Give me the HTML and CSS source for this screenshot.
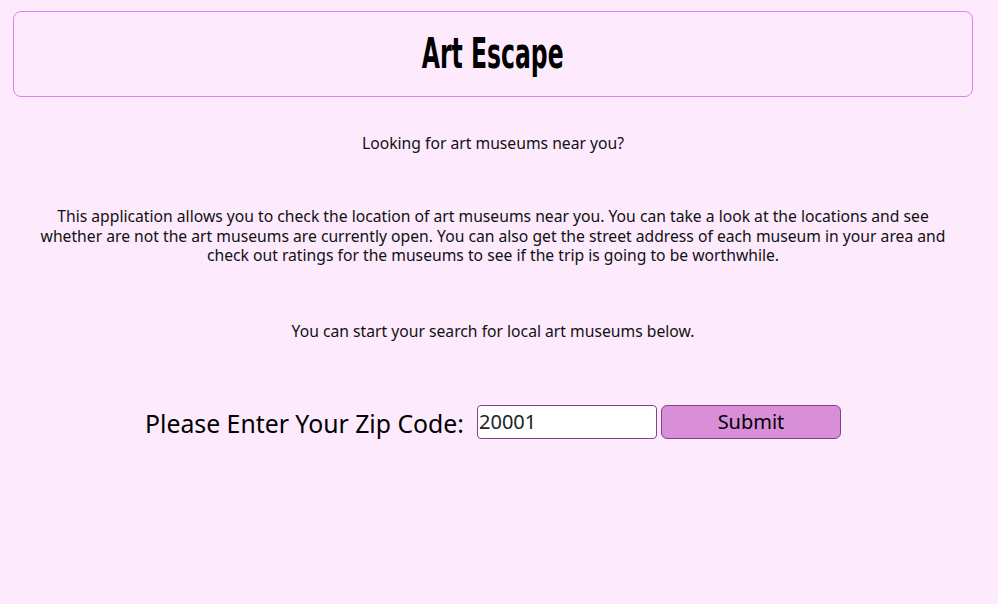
FILE: index.html
```html
<!DOCTYPE html>
<html lang="en">
<head>
<meta charset="utf-8">
<title>Art Escape</title>
<link rel="stylesheet" href="styles.css">
</head>
<body>
<div class="page">
  <header class="banner">
    <h1 class="title">Art Escape</h1>
  </header>
  <main class="content">
    <p class="lead">Looking for art museums near you?</p>
    <p class="about">This application allows you to check the location of art museums near you. You can take a look at the locations and see whether are not the art museums are currently open. You can also get the street address of each museum in your area and check out ratings for the museums to see if the trip is going to be worthwhile.</p>
    <p class="start">You can start your search for local art museums below.</p>
    <form class="zip-form">
      <label class="zip-label" for="zip">Please Enter Your Zip Code:</label>
      <input class="zip-input" id="zip" type="text" value="20001">
      <button class="zip-submit" type="button">Submit</button>
    </form>
  </main>
</div>
</body>
</html>
```

FILE: styles.css
```css
html, body {
  margin: 0;
  padding: 0;
  background: #fdebfd;
}
body {
  font-family: "Noto Sans", "Open Sans", sans-serif;
  color: #111;
}
.page {
  width: 960px;
  margin: 0 0 0 13px;
  padding-top: 11px;
}
.banner {
  border: 1px solid #dc82ec;
  border-radius: 8px;
  height: 84px;
  display: flex;
  align-items: center;
  justify-content: center;
}
.title {
  margin: 0;
  display: inline-block;
  font-family: "DejaVu Sans", sans-serif;
  font-weight: bold;
  font-size: 42px;
  line-height: 1;
  letter-spacing: 0;
  color: #000;
  transform: scaleX(0.56);
}
.content {
  text-align: center;
  padding: 0 22px;
}
.lead {
  margin: 36px 0 0;
  font-size: 15.7px;
  line-height: 20px;
}
.about {
  margin: 54px 0 0;
  font-size: 15.7px;
  line-height: 19.5px;
}
.start {
  margin: 55px 0 0;
  font-size: 15.7px;
  line-height: 20px;
}
.zip-form {
  margin-top: 63px;
  display: flex;
  justify-content: center;
  align-items: center;
  gap: 4px;
}
.zip-label {
  font-size: 24.8px;
  line-height: 34px;
  margin-right: 9px;
  padding-top: 2px;
  color: #000;
}
.zip-input {
  box-sizing: border-box;
  width: 180px;
  height: 34px;
  border: 1px solid #86408a;
  border-radius: 4px;
  background: #fff;
  font-family: inherit;
  font-size: 20px;
  padding: 0 1px;
  color: #222;
}
.zip-submit {
  box-sizing: border-box;
  width: 180px;
  height: 34px;
  border: 1px solid #86408a;
  border-radius: 6px;
  background: #d98fd8;
  font-family: inherit;
  font-size: 20px;
  color: #000;
}
```
